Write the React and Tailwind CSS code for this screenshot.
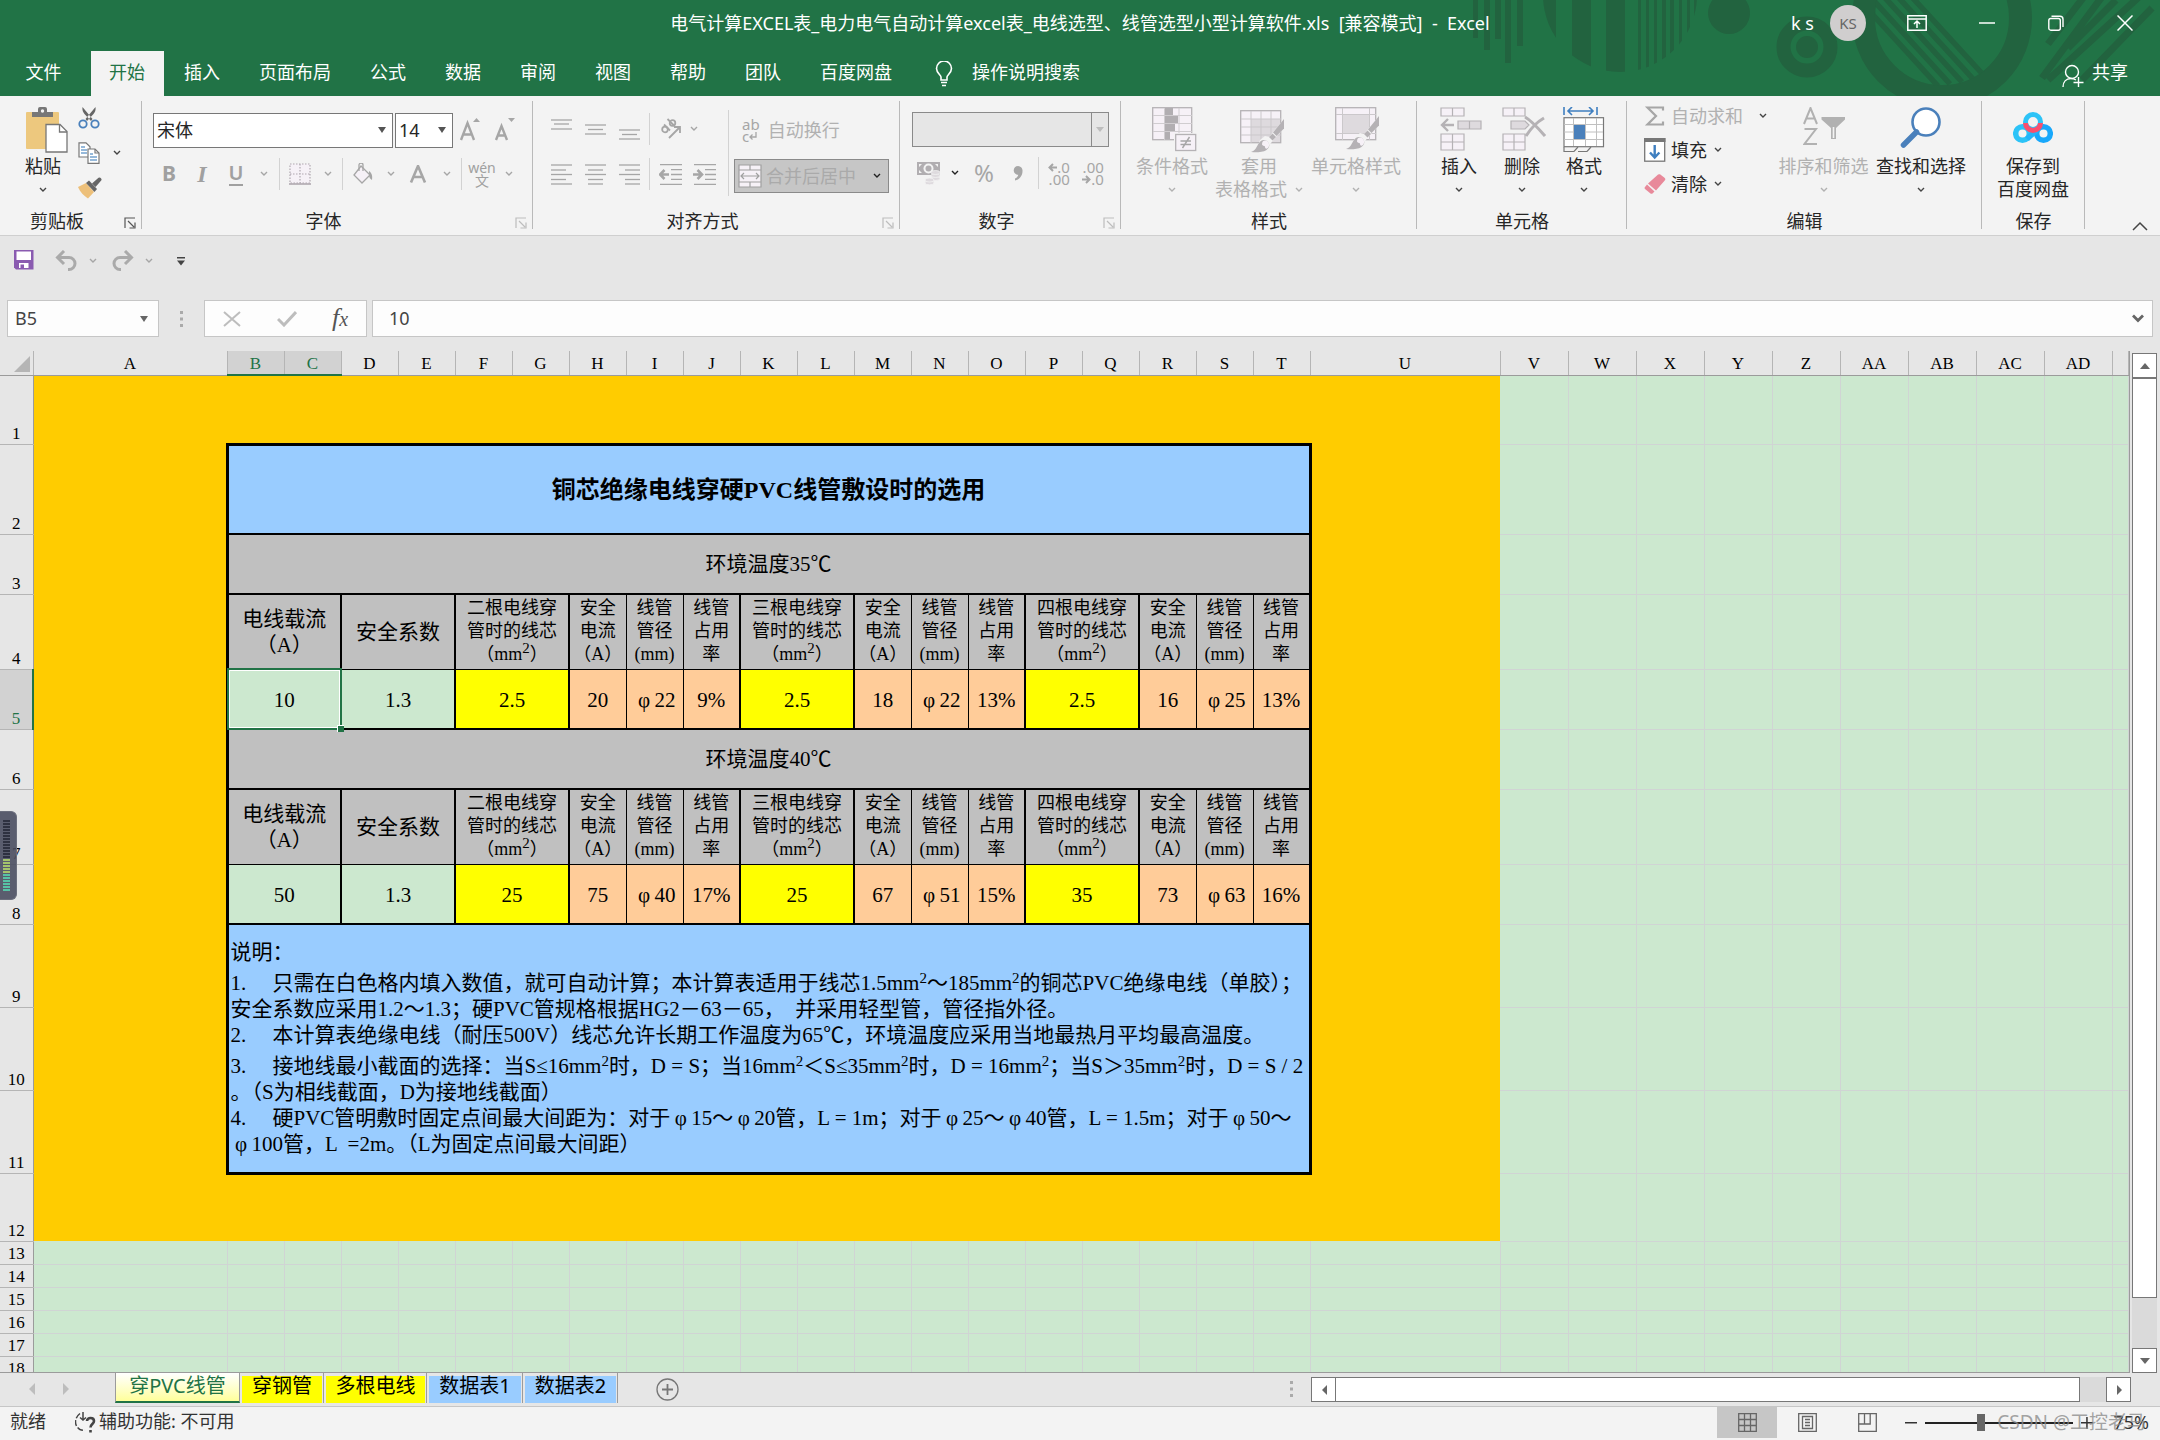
import React from "react";

const UI = "font-['Noto_Sans','Noto_Sans_CJK_SC',sans-serif]";
const SONG = "font-['Liberation_Serif','Noto_Sans_CJK_SC',serif]";

/* ---------- small parts ---------- */

function Chevron({ color = "#444", className = "" }) {
  return (
    <svg width="8" height="6" viewBox="0 0 8 6" fill="none" stroke={color} strokeWidth="1.4" className={className}>
      <path d="M1 1l3 3 3-3" />
    </svg>
  );
}

function Sep({ className = "" }) {
  return <span className={"w-px shrink-0 bg-[#d2d2d2] " + className} />;
}

function Tool({ label, w, children }) {
  return (
    <button type="button" aria-label={label} className={"flex h-8 shrink-0 items-center justify-center " + w}>
      {children}
    </button>
  );
}

function Launcher({ color }) {
  return (
    <svg width="12" height="12" viewBox="0 0 12 12" fill="none" stroke={color} strokeWidth="1.2">
      <path d="M1 11V1h10M4 4l6 6M11 5.500V11H5.500" />
    </svg>
  );
}

function Group({ label, w, launcher, children }) {
  return (
    <section aria-label={label} className={"relative flex shrink-0 flex-col " + w}>
      <div className="flex h-[111px]">{children}</div>
      <div className="flex h-7 items-center">
        <span className="flex-1 text-center leading-7 whitespace-nowrap">{label}</span>
        {launcher ? (
          <button type="button" aria-label={label + "设置"} className="flex w-7 justify-center pt-1 pl-2 pr-1">
            <Launcher color={launcher} />
          </button>
        ) : null}
      </div>
      <span className="absolute top-[5px] right-0 h-32 w-px bg-[#b9b9b9]" />
    </section>
  );
}

function BigButton({ w, icon, lines, disabled, inlineChevron, noChevron }) {
  const c = disabled ? "#b1b1b1" : "#444";
  return (
    <button
      type="button"
      className={
        "flex shrink-0 flex-col items-center pt-[11px] leading-[23px] whitespace-nowrap " +
        (disabled ? "text-[#b1b1b1] " : "text-[#262626] ") + w
      }
    >
      <span className="flex h-12 items-start">{icon}</span>
      <span>{lines[0]}</span>
      {lines[1] ? (
        <span className="flex items-center gap-2">
          {lines[1]}
          {inlineChevron ? <Chevron color={c} /> : null}
        </span>
      ) : null}
      {!lines[1] && !noChevron ? (
        <span className="flex h-[23px] items-center">
          <Chevron color={c} />
        </span>
      ) : null}
    </button>
  );
}

/* ---------- title bar ---------- */

function TitleArt() {
  return (
    <svg className="absolute top-0 right-0 h-24 w-[720px]" viewBox="0 0 720 96" fill="#22633f">
      <defs>
        <clipPath id="disc"><circle cx="180" cy="-5" r="77" /></clipPath>
        <clipPath id="ringhole"><circle cx="502" cy="18" r="68" /></clipPath>
      </defs>
      <path d="M33 0h5v38h-5zM44 0h6v50h-6zM55 0h6v39h-6zM65 0h6v63h-6zM77 0h6v46h-6z" />
      <g clipPath="url(#disc)">
        <path d="M100 0h16v90h-16zM132 0h19v90h-19zM166 0h19v90h-19zM198 0h3v90h-3zM206 0h3v90h-3zM214 0h3v90h-3zM222 0h4v90h-4zM230 0h4v90h-4zM239 0h3v90h-3zM247 0h3v90h-3zM254 0h3v90h-3z" />
      </g>
      <circle cx="289" cy="13" r="21" />
      <circle cx="367" cy="47" r="23.500" fill="none" stroke="#22633f" strokeWidth="14" />
      <circle cx="367" cy="47" r="11" />
      <circle cx="502" cy="18" r="78.500" fill="none" stroke="#22633f" strokeWidth="23" />
      <g clipPath="url(#ringhole)" stroke="#22633f" strokeWidth="5.500">
        <path d="M412 -8l86 94M424 -10l86 94M436 -12l86 94M448 -14l86 94M460 -16l88 96" />
      </g>
      <g stroke="#22633f" strokeWidth="7">
        <path d="M646 -6l-38 50M664 -6l-62 84M676 0l-48 48M700 -4l-92 84M712 8l-70 72" />
      </g>
    </svg>
  );
}

function TitleBar() {
  const tabs = ["插入", "页面布局", "公式", "数据", "审阅", "视图", "帮助", "团队", "百度网盘"];
  return (
    <header className="relative h-24 shrink-0 bg-[#217346] text-white">
      <TitleArt />
      <div className="relative grid h-[51px] grid-cols-[1fr_auto_1fr] items-center">
        <span />
        <h1 className="pb-1 whitespace-pre">
          电气计算EXCEL表_电力电气自动计算excel表_电线选型、线管选型小型计算软件.xls  [兼容模式]  -  Excel
        </h1>
        <div className="flex items-center justify-end pb-[5px]">
          <span className="pr-4">k s</span>
          <button type="button" className="mr-[41px] size-9 rounded-full bg-[#d0cece] text-[15px] text-[#666]">KS</button>
          <button type="button" aria-label="功能区显示选项" className="mr-[52px]">
            <svg width="20" height="16" viewBox="0 0 20 16" fill="none" stroke="#fff" strokeWidth="1.500">
              <path d="M.8.8h18.400v14.400H.8zM1 4h18M10 13V6.500M7 9l3-3 3 3" />
            </svg>
          </button>
          <button type="button" aria-label="最小化" className="mr-[53px]">
            <svg width="16" height="16" viewBox="0 0 16 16" stroke="#fff" strokeWidth="1.500"><path d="M0 8h16" /></svg>
          </button>
          <button type="button" aria-label="还原" className="mr-[53px]">
            <svg width="16" height="16" viewBox="0 0 16 16" fill="none" stroke="#fff" strokeWidth="1.400">
              <rect x=".8" y="3.500" width="11.500" height="11.700" rx="2" />
              <path d="M3.500 1.200H12a3 3 0 013 3V12" />
            </svg>
          </button>
          <button type="button" aria-label="关闭" className="mr-[27px]">
            <svg width="16" height="16" viewBox="0 0 16 16" stroke="#fff" strokeWidth="1.500"><path d="M.5.5l15 15M15.500.5l-15 15" /></svg>
          </button>
        </div>
      </div>
      <nav className="relative flex h-[45px] items-stretch leading-[42px]">
        <button type="button" className="w-[91px] pr-1 pb-[3px]">文件</button>
        <button type="button" className="w-[73px] bg-[#f3f3f3] pr-px pb-[3px] text-[#217346]">开始</button>
        {tabs.map((t) => (
          <button key={t} type="button" className="ml-px px-[19px] pb-[3px] whitespace-nowrap">{t}</button>
        ))}
        <button type="button" className="ml-6 flex items-center gap-[19px] whitespace-nowrap">
          <svg width="18" height="26" viewBox="0 0 18 26" fill="none" stroke="#fff" strokeWidth="1.600">
            <path d="M6 19v-3c0-2-4.500-4-4.500-8.500a7.500 7.500 0 0115 0C16.500 12 12 14 12 16v3zM6 21.500h6M7 24.500h4" />
          </svg>
          <span className="pb-[3px]">操作说明搜索</span>
        </button>
        <button type="button" className="mr-8 ml-auto flex items-center gap-2">
          <svg width="22" height="24" viewBox="0 0 22 24" fill="none" stroke="#fff" strokeWidth="1.400" className="mt-1">
            <circle cx="10" cy="8" r="6.500" />
            <path d="M1 23c0-5 3-8.500 8-8.500 2 0 3.500.5 5 1.500M16.500 13v10M11.500 18.500h10" />
          </svg>
          <span className="pb-[3px]">共享</span>
        </button>
      </nav>
    </header>
  );
}

/* ---------- ribbon icons ---------- */

const G = "#a6a6a6";

function PasteIcon() {
  return (
    <svg width="42" height="46" viewBox="0 0 42 46">
      <rect x="0" y="5" width="33" height="37" rx="1" fill="#edc87e" />
      <path d="M6 5h6V2a2 2 0 012-2h5a2 2 0 012 2v3h6v5H6z" fill="#777" />
      <circle cx="16.500" cy="4" r="1.700" fill="#f3f3f3" />
      <path d="M20 17.500h14l7 7V45H20z" fill="#fff" stroke="#777" strokeWidth="1.300" />
      <path d="M33.500 17.500v7.500H41" fill="none" stroke="#777" strokeWidth="1.300" />
    </svg>
  );
}

function ScissorsIcon() {
  return (
    <svg width="22" height="22" viewBox="0 0 22 22" fill="none">
      <path d="M4.500 0C4 3 5 5 6.500 7l6.500 7 1.500-2zM17.500 0c.5 3-.5 5-2 7L9 14l-1.500-2z" fill="#666" />
      <circle cx="5" cy="17" r="3.700" stroke="#4a80bb" strokeWidth="1.800" />
      <circle cx="17" cy="17" r="3.700" stroke="#4a80bb" strokeWidth="1.800" />
    </svg>
  );
}

function CopyIcon() {
  return (
    <svg width="22" height="22" viewBox="0 0 22 22" strokeWidth="1.200">
      <path d="M1 .8h7l4 4V15H1z" fill="#fff" stroke="#777" />
      <path d="M3 5h4M3 8h6M3 11h6" stroke="#2f75b5" />
      <path d="M10 7h7l4 4v10.400H10z" fill="#fff" stroke="#777" />
      <path d="M17 7v4h4" fill="none" stroke="#777" />
      <path d="M12 12h3M12 15h7M12 18h7" stroke="#2f75b5" />
    </svg>
  );
}

function BrushIcon() {
  return (
    <svg width="24" height="22" viewBox="0 0 24 22">
      <path d="M0 10l8-4 8 9-6 6.500C6 19 2 15 0 10z" fill="#edc07a" />
      <path d="M8 6l3-2.500 8 8.500-2.500 3z" fill="#666" />
      <path d="M14 6.500L20.500.8a2 2 0 012.700 2.800L17.500 10z" fill="#666" />
    </svg>
  );
}

function Lines({ rows }) {
  return (
    <svg width="21" height="21" viewBox="0 0 21 21" stroke={G} strokeWidth="1.300">
      {rows.map(([y, a, b], i) => <path key={i} d={`M${a} ${y}H${b}`} />)}
    </svg>
  );
}

function IndentIcon({ right }) {
  return (
    <svg width="23" height="21" viewBox="0 0 23 21" stroke={G} strokeWidth="1.300" fill="none">
      <path d="M1 .7h22M12 5.700h11M12 10.500h11M12 15.300h11M1 20.300h22" />
      <path d={right ? "M0 10.500h8M4.500 6l4.500 4.500L4.500 15" : "M10 10.500H2M5.500 6L1 10.500 5.500 15"} strokeWidth="2.600" />
    </svg>
  );
}

function CondIcon() {
  return (
    <svg width="45" height="46" viewBox="0 0 45 46" fill="none">
      <rect x=".7" y=".7" width="39" height="32" fill="#f6f1f7" stroke="#b5b2b5" strokeWidth="1.300" />
      <path d="M1 8.500h39M1 16.500h39M1 24.500h39M12.500 1v32M27 1v32" stroke="#d0cdd0" />
      <path d="M13 1h8v7h-8zM13 9h13v7H13zM13 17h10v7H13zM13 25h5v7h-5z" fill="#b1aeb1" />
      <rect x="22" y="26" width="23" height="19" fill="#f3f3f3" />
      <rect x="23.700" y="27.500" width="20" height="16" fill="#f6f1f7" stroke="#b5b2b5" strokeWidth="1.300" />
      <path d="M28.500 34h10.500M28.500 37.500h10.500M37.500 30l-7 11" stroke="#a6a6a6" strokeWidth="1.400" />
    </svg>
  );
}

function Painter() {
  return (
    <g>
      <path d="M44 12v9.500L35.500 30.500 32.500 34 27 41l-6 5H9l8-5 3-8 5-4 4 1z" fill="#f3f3f3" />
      <path d="M44 12v9.500L36.500 29 33 25.500z" fill="#b5b2b5" />
      <path d="M32.500 26.500L36 30l-3.500 3.500-3.500-3.500z" fill="#b5b2b5" />
      <path d="M11 45c5-1.500 5-5 8-9 2-3 5-4 8-2 3 3 3 6 0 8.500-3 2.500-7 3-16 2.500z" fill="#b5b2b5" />
      <path d="M25 33.500c3 0 4.500 2.500 4 5.500-1 3-4 4-4 .5-1-1-2.500-.5-3-2 0-2.500 1-4 3-4z" fill="#f6f1f7" />
    </g>
  );
}

function TableStyleIcon() {
  return (
    <svg width="46" height="46" viewBox="0 0 46 46" fill="none">
      <rect x=".7" y="3.700" width="40" height="32" fill="#f6f1f7" stroke="#b5b2b5" strokeWidth="1.300" />
      <path d="M11 12h29v23H11z" fill="#dedade" />
      <path d="M1 12h40M1 20h40M1 28h40M11 4v32M21 4v32M31 4v32" stroke="#cbc8cb" />
      <Painter />
    </svg>
  );
}

function CellStyleIcon() {
  return (
    <svg width="46" height="46" viewBox="0 0 46 46" fill="none">
      <rect x=".7" y=".7" width="40" height="32" fill="#f6f1f7" stroke="#b5b2b5" strokeWidth="1.300" />
      <path d="M8 8h26v18H8z" fill="#dedade" />
      <path d="M1 7.500h40M1 26.500h40M7.500 1v32M34.500 1v32" stroke="#cbc8cb" />
      <g transform="translate(0 -3)"><Painter /></g>
    </svg>
  );
}

function InsertIcon() {
  return (
    <svg width="43" height="44" viewBox="0 0 43 44" fill="#f6f1f7" stroke="#b5b2b5" strokeWidth="1.200">
      <path d="M1 1h23v8H1zM12.500 1v8M1 27h23v16H1zM1 35h23M12.500 27v16" />
      <path d="M18 14h23v8H18zM29.500 14v8" fill="#dedade" />
      <path d="M14 18H2M8 12l-6 6 6 6" fill="none" strokeWidth="2.400" />
    </svg>
  );
}

function DeleteIcon() {
  return (
    <svg width="44" height="44" viewBox="0 0 44 44" fill="#f6f1f7" stroke="#b5b2b5" strokeWidth="1.200">
      <path d="M1 1h22v8H1zM12 1v8M1 27h22v16H1zM1 35h22M12 27v16" />
      <path d="M9 14h14l4 4-4 4H9z" fill="#dedade" />
      <path d="M23 10c7 4 13 11 20 19M42 11c-7 4-13 10-18 18" fill="none" strokeWidth="3" />
    </svg>
  );
}

function FormatIcon() {
  return (
    <svg width="42" height="46" viewBox="0 0 42 46" fill="none">
      <path d="M1 0v8M34 0v8M5 4h25M9 0L5 4l4 4M26 0l4 4-4 4" stroke="#3f7fc0" strokeWidth="1.600" />
      <rect x="1" y="10.700" width="39.500" height="29" fill="#fff" stroke="#777" strokeWidth="1.200" />
      <path d="M1 17.500h39M1 32.500h39M10.500 11v28M22.500 11v28M33.500 11v28M1 25h39" stroke="#c0c0c0" />
      <path d="M11 18h11v14H11z" fill="#4a80bb" />
      <path d="M1 40v4.500h10l4-4.500M15 44.500h9l4-4.500" stroke="#777" strokeWidth="1.200" />
    </svg>
  );
}

function SortIcon() {
  return (
    <svg width="42" height="40" viewBox="0 0 42 40" fill="none" stroke="#b1b1b1" strokeWidth="2">
      <path d="M1 17L7.500 1 14 17M3.500 11.500h8M1.500 22h11.500L1.500 37H14" />
      <path d="M18.500 10h23.500v2.500l-9 8.500V32h-5V21l-9.500-8.500z" fill="#b1b1b1" stroke="none" />
      <path d="M30.500 20v11" stroke="#f3f3f3" strokeWidth="1.600" />
    </svg>
  );
}

function FindIcon() {
  return (
    <svg width="42" height="42" viewBox="0 0 42 42" fill="none" stroke="#4a80bb">
      <circle cx="26" cy="15" r="13.500" fill="#fff" strokeWidth="2.600" />
      <path d="M16.500 25L3.500 38" strokeWidth="5.500" strokeLinecap="round" />
    </svg>
  );
}

function BaiduIcon() {
  return (
    <svg width="40" height="34" viewBox="0 0 40 34" fill="none" strokeWidth="5.500">
      <circle cx="9.500" cy="22.500" r="6.800" stroke="#2cc3f7" />
      <circle cx="30.500" cy="22.500" r="6.800" stroke="#18a8fb" />
      <path d="M14 28l12-11" stroke="#22b4fa" />
      <circle cx="20" cy="11" r="7.500" stroke="#2cc3f7" strokeWidth="5" />
      <path d="M12.500 12a7.500 7.500 0 0015 0" stroke="#fa4f6e" strokeWidth="5" />
    </svg>
  );
}

/* ---------- ribbon ---------- */

function Ribbon() {
  const smallRow = "flex h-[34px] items-center whitespace-nowrap";
  return (
    <div className="flex h-[140px] shrink-0 border-b border-[#cfcfcf] bg-[#f3f3f3] text-[#262626]">
      <Group label="剪贴板" w="w-[142px]" launcher="#555">
        <BigButton w="w-[62px] ml-[12px]" icon={<span className="pl-2"><PasteIcon /></span>} lines={["粘贴"]} />
        <div className="flex flex-col gap-[13px] pt-[11px] pl-1">
          <button type="button" aria-label="剪切"><ScissorsIcon /></button>
          <button type="button" aria-label="复制" className="flex items-center gap-[13px]"><CopyIcon /><Chevron /></button>
          <button type="button" aria-label="格式刷"><BrushIcon /></button>
        </div>
      </Group>

      <Group label="字体" w="w-[391px]" launcher="#bdbdbd">
        <div className="flex flex-col pt-4 pl-[11px]">
          <div className="flex h-9 items-center">
            <label className="relative mr-[2px] block">
              <select aria-label="字体" className="h-[35px] w-60 appearance-none border border-[#777] bg-white pl-[3px]">
                <option>宋体</option>
              </select>
              <svg width="8" height="6" className="absolute top-[14px] right-[7px]"><path d="M0 0h8l-4 6z" fill="#555" /></svg>
            </label>
            <label className="relative block">
              <select aria-label="字号" className="h-[35px] w-[58px] appearance-none border border-[#777] bg-white pl-[3px]">
                <option>14</option>
              </select>
              <svg width="8" height="6" className="absolute top-[14px] right-[7px]"><path d="M0 0h8l-4 6z" fill="#555" /></svg>
            </label>
            <Tool label="增大字号" w="w-[34px]">
              <svg width="22" height="24" viewBox="0 0 22 24" fill="none" stroke={G} strokeWidth="2.400">
                <path d="M2 22L8.500 5 15 22M4.500 16.500h8" /><path d="M14 4l3.500-4L21 4z" fill={G} stroke="none" />
              </svg>
            </Tool>
            <Tool label="减小字号" w="w-[34px]">
              <svg width="22" height="24" viewBox="0 0 22 24" fill="none" stroke={G} strokeWidth="2.400">
                <path d="M3 22L8.500 8 14 22M5 17.500h7" /><path d="M15 0h7l-3.500 4z" fill={G} stroke="none" />
              </svg>
            </Tool>
          </div>
          <div className="mt-[10px] flex h-8 items-center text-[21px] text-[#a0a0a0]">
            <Tool label="加粗" w="w-8"><b>B</b></Tool>
            <Tool label="倾斜" w="w-[34px]"><i className="font-['Liberation_Serif',serif] text-[24px] font-bold">I</i></Tool>
            <Tool label="下划线" w="w-[34px]"><span className="border-b-2 border-[#a0a0a0] text-[20px] leading-[22px] font-semibold">U</span></Tool>
            <Tool label="下划线选项" w="w-[22px]"><Chevron color={G} /></Tool>
            <Sep className="mx-1 h-8" />
            <Tool label="边框" w="w-8">
              <svg width="22" height="22" viewBox="0 0 22 22" fill="#f6f1f7" stroke="#b0a8b0" strokeWidth="1.200">
                <path d="M1 1h20v19H1zM11 1v19M1 11h20" strokeDasharray="1.500 1.500" /><path d="M0 21h22" strokeWidth="1.600" />
              </svg>
            </Tool>
            <Tool label="边框选项" w="w-6"><Chevron color={G} /></Tool>
            <Sep className="mx-[2px] h-8" />
            <Tool label="填充颜色" w="w-9">
              <svg width="20" height="22" viewBox="0 0 20 22" fill="none" stroke={G} strokeWidth="1.300">
                <path d="M8 3l9 9-8 8-8-8z" fill="#f6f1f7" /><path d="M6 8V2a2 2 0 014 0v6" /><path d="M16 8c3 2 3.500 5 3 9-2-1-3-3-3-5z" fill={G} stroke="none" />
              </svg>
            </Tool>
            <Tool label="填充颜色选项" w="w-5"><Chevron color={G} /></Tool>
            <Tool label="字体颜色" w="w-[34px]">
              <svg width="18" height="18" viewBox="0 0 18 18" fill="none" stroke={G} strokeWidth="2.600"><path d="M2 17.500L9 1l7 16.500M4.500 12h9" /></svg>
            </Tool>
            <Tool label="字体颜色选项" w="w-6"><Chevron color={G} /></Tool>
            <Sep className="mx-[2px] h-8" />
            <Tool label="拼音指南" w="w-9">
              <span className="flex flex-col items-center text-[14px] leading-3"><span className="pb-px">wén</span><span>文</span></span>
            </Tool>
            <Tool label="拼音指南选项" w="w-[18px]"><Chevron color={G} /></Tool>
          </div>
        </div>
      </Group>

      <Group label="对齐方式" w="w-[367px]" launcher="#bdbdbd">
        <div className="flex flex-col pt-[17px] pl-[11px]">
          <div className="flex h-8 items-center">
            <Tool label="顶端对齐" w="w-[34px]"><Lines rows={[[1, 0, 21], [5, 3, 18], [10, 0, 21]]} /></Tool>
            <Tool label="垂直居中" w="w-[34px]"><Lines rows={[[6, 0, 21], [10.5, 3, 18], [15, 0, 21]]} /></Tool>
            <Tool label="底端对齐" w="w-[34px]"><Lines rows={[[11, 0, 21], [15.5, 3, 18], [20, 0, 21]]} /></Tool>
            <Sep className="mr-1 ml-[3px] h-8" />
            <Tool label="方向" w="w-[50px]">
              <svg width="22" height="22" viewBox="0 0 22 22" fill="none" stroke={G} strokeWidth="1.800">
                <circle cx="5" cy="11.500" r="2.800" /><path d="M4 6.500l6 6" /><path d="M7.500 1l7 7" /><circle cx="12.500" cy="5" r="2.800" /><path d="M9 20L20 9M14 9h6v6" />
              </svg>
              <Chevron color={G} className="ml-2" />
            </Tool>
          </div>
          <div className="mt-[13px] flex h-8 items-center">
            <Tool label="左对齐" w="w-[34px]"><Lines rows={[[1, 0, 21], [6, 0, 15], [10.5, 0, 21], [15.5, 0, 15], [20, 0, 21]]} /></Tool>
            <Tool label="居中" w="w-[34px]"><Lines rows={[[1, 0, 21], [6, 3, 18], [10.5, 0, 21], [15.5, 3, 18], [20, 3, 18]]} /></Tool>
            <Tool label="右对齐" w="w-[34px]"><Lines rows={[[1, 0, 21], [6, 6, 21], [10.5, 0, 21], [15.5, 6, 21], [20, 6, 21]]} /></Tool>
            <Sep className="mr-1 ml-[3px] h-8" />
            <Tool label="减少缩进量" w="w-8"><IndentIcon /></Tool>
            <Tool label="增加缩进量" w="w-9"><IndentIcon right /></Tool>
          </div>
        </div>
        <Sep className="mt-[14px] ml-[6px] h-[86px]" />
        <div className="flex flex-col pt-4 pl-[5px]">
          <button type="button" className="flex h-9 items-center gap-[8px] pl-2 text-[#b1b1b1]">
            <span className="flex flex-col text-[15px] leading-3 text-[#a6a6a6]">
              <span>ab</span>
              <span className="flex items-center">
                c
                <svg width="8" height="8" viewBox="0 0 8 8" fill="none" stroke={G} strokeWidth="1.300"><path d="M7 0v5H1M3.500 2.500L1 5l2.500 2.500" /></svg>
              </span>
            </span>
            自动换行
          </button>
          <button type="button" className="mt-[11px] flex h-[34px] w-[155px] items-center border border-[#8a8a8a] bg-[#c6c6c6] pl-[3px] text-[#aaa]">
            <svg width="24" height="24" viewBox="0 0 24 24" fill="#f6f1f7" stroke="#a0a0a0" strokeWidth="1.200">
              <path d="M1 1h22v5H1zM12 1v5M1 6h22v12H1zM1 18h22v5H1zM12 18v5" /><path d="M3 12h18M6 9l-3 3 3 3M18 9l3 3-3 3" fill="none" />
            </svg>
            <span className="pl-1">合并后居中</span>
            <Chevron color="#222" className="ml-[17px]" />
          </button>
        </div>
      </Group>

      <Group label="数字" w="w-[221px]" launcher="#bdbdbd">
        <div className="flex flex-col pt-4 pl-3">
          <label className="relative block">
            <select aria-label="数字格式" disabled className="h-[35px] w-[197px] appearance-none border border-[#8a8a8a] bg-[#e6e6e6]"><option></option></select>
            <span className="absolute top-0 right-[19px] h-[35px] w-px bg-[#8a8a8a]" />
            <svg width="8" height="5" className="absolute top-[15px] right-[7px]"><path d="M0 0h8l-4 5z" fill="#bdbdbd" /></svg>
          </label>
          <div className="mt-[10px] flex h-8 items-center text-[#a6a6a6]">
            <Tool label="会计数字格式" w="w-8">
              <svg width="23" height="23" viewBox="0 0 23 23">
                <path d="M0 0h23v13H0z" fill="#b1aeb1" /><circle cx="11.500" cy="6.500" r="5" fill="#f3f3f3" /><circle cx="11.500" cy="6.500" r="3" fill="#b1aeb1" />
                <path d="M2 2h3L2 5zM21 2h-3l3 3zM2 11h3L2 8z" fill="#f3f3f3" />
                <g fill="#dedade" stroke="#f3f3f3" strokeWidth=".8"><ellipse cx="18.500" cy="16.500" rx="4.500" ry="2" /><ellipse cx="18.500" cy="13.500" rx="4.500" ry="2" /><ellipse cx="18.500" cy="10.500" rx="4.500" ry="2" /><ellipse cx="12.500" cy="20.800" rx="4.500" ry="2" /><ellipse cx="12.500" cy="18" rx="4.500" ry="2" /></g>
              </svg>
            </Tool>
            <Tool label="会计格式选项" w="w-[22px]"><Chevron color="#222" /></Tool>
            <Tool label="百分比样式" w="w-[36px]"><span className="text-[24px]">%</span></Tool>
            <Tool label="千位分隔样式" w="w-8">
              <svg width="10" height="15" viewBox="0 0 10 15" fill={G}><path d="M5 0a4.500 4.500 0 014.500 5c0 5-3 8.500-7.500 9.500v-2c2-1 3-2 3.200-3.700A4.300 4.300 0 115 0z" /></svg>
            </Tool>
            <Sep className="mx-1 h-8" />
            <Tool label="增加小数位数" w="w-8">
              <span className="flex flex-col items-end text-[15px] leading-3">
                <span className="flex items-center"><svg width="9" height="9" viewBox="0 0 9 9" fill="none" stroke={G} strokeWidth="2"><path d="M9 4.500H1.500M5 1L1.500 4.500 5 8" /></svg>.0</span>
                <span>.00</span>
              </span>
            </Tool>
            <Tool label="减少小数位数" w="w-9">
              <span className="flex flex-col items-end text-[15px] leading-3">
                <span>.00</span>
                <span className="flex items-center"><svg width="9" height="9" viewBox="0 0 9 9" fill="none" stroke={G} strokeWidth="2"><path d="M0 4.500h7.500M4 1l3.500 3.500L4 8" /></svg>.0</span>
              </span>
            </Tool>
          </div>
        </div>
      </Group>

      <Group label="样式" w="w-[296px]">
        <BigButton w="w-[86px] ml-2" disabled icon={<span className="pl-1"><CondIcon /></span>} lines={["条件格式"]} />
        <BigButton w="w-[88px]" disabled inlineChevron icon={<span className="pl-2"><TableStyleIcon /></span>} lines={["套用", "表格格式"]} />
        <BigButton w="w-[98px] ml-1" disabled icon={<span className="pl-1"><CellStyleIcon /></span>} lines={["单元格样式"]} />
      </Group>

      <Group label="单元格" w="w-[210px]">
        <BigButton w="w-[62px] ml-[11px]" icon={<span className="pl-1"><InsertIcon /></span>} lines={["插入"]} />
        <BigButton w="w-[62px] ml-px" icon={<span className="pl-1"><DeleteIcon /></span>} lines={["删除"]} />
        <BigButton w="w-[62px]" icon={<FormatIcon />} lines={["格式"]} />
      </Group>

      <Group label="编辑" w="w-[355px]">
        <div className="flex w-[148px] flex-col pt-[3px] pl-[17px]">
          <button type="button" className={smallRow + " text-[#b1b1b1]"}>
            <svg width="22" height="20" viewBox="0 0 22 20" fill="none" stroke={G} strokeWidth="2.200"><path d="M19 4.500V1.500H3.500L12 10l-8.500 8.500H19v-3" /></svg>
            <span className="pl-[5px]">自动求和</span><Chevron className="ml-4" />
          </button>
          <button type="button" className={smallRow}>
            <svg width="22" height="24" viewBox="0 0 22 24"><rect x=".7" y=".7" width="20" height="22.500" fill="#fff" stroke="#777" strokeWidth="1.300" /><path d="M0 0h21.500v4H0z" fill="#777" /><path d="M10.700 7v12M6 14.500l4.700 5 4.700-5" fill="none" stroke="#3f7fc0" strokeWidth="2.400" /></svg>
            <span className="pl-[5px]">填充</span><Chevron className="ml-[7px]" />
          </button>
          <button type="button" className={smallRow}>
            <svg width="22" height="20" viewBox="0 0 22 20" fill="#e8899a"><path d="M13 1.500a3 3 0 013-1.200l4.500 3.500a2 2 0 010 3L12 16.500 4 9.500zM3 10.500l7.500 7-2 2a2 2 0 01-2 0L1 15a1.500 1.500 0 010-2z" /></svg>
            <span className="pl-[5px]">清除</span><Chevron className="ml-[7px]" />
          </button>
        </div>
        <BigButton w="w-[97px]" disabled icon={<SortIcon />} lines={["排序和筛选"]} />
        <BigButton w="w-[98px]" icon={<FindIcon />} lines={["查找和选择"]} />
      </Group>

      <Group label="保存" w="w-[103px]">
        <BigButton w="w-[102px]" icon={<span className="pt-1"><BaiduIcon /></span>} lines={["保存到", "百度网盘"]} />
      </Group>

      <button type="button" aria-label="折叠功能区" className="mr-3 mb-1 ml-auto self-end">
        <svg width="16" height="10" viewBox="0 0 16 10" fill="none" stroke="#444" strokeWidth="1.500"><path d="M1 9l7-7 7 7" /></svg>
      </button>
    </div>
  );
}

/* ---------- quick access + formula bar ---------- */

function QuickAccess() {
  const arrow = "M2 7.500h12a6 6 0 010 12h-1M9 1L2.500 7.500 9 14";
  return (
    <div className="flex h-16 shrink-0 items-start pt-[14px] pl-[14px]">
      <button type="button" aria-label="保存">
        <svg width="20" height="20" viewBox="0 0 20 20"><path d="M0 0h19.500v19.500H2L0 17.500z" fill="#8a5bb0" /><path d="M2.500 1.500H17V10H2.500zM5 13h9.500v5H5z" fill="#fff" /><path d="M6.500 14.500h3.500V18H6.500z" fill="#8a5bb0" /></svg>
      </button>
      <button type="button" aria-label="撤消" className="ml-[21px] flex items-center gap-[11px]">
        <svg width="23" height="22" viewBox="0 0 23 22" fill="none" stroke="#aaa" strokeWidth="3"><path d={arrow} /></svg>
        <Chevron color={G} />
      </button>
      <button type="button" aria-label="恢复" className="ml-[14px] flex items-center gap-[11px]">
        <svg width="23" height="22" viewBox="0 0 23 22" fill="none" stroke="#aaa" strokeWidth="3"><path d={arrow} transform="matrix(-1 0 0 1 23 0)" /></svg>
        <Chevron color={G} />
      </button>
      <button type="button" aria-label="自定义快速访问工具栏" className="mt-[7px] ml-6">
        <svg width="8" height="9" viewBox="0 0 8 9" fill="#444"><path d="M0 0h8v1.500H0zM0 3.500h8l-4 5z" /></svg>
      </button>
    </div>
  );
}

function Dots() {
  return (
    <svg width="3" height="16" viewBox="0 0 3 16" fill="#aaa"><path d="M0 0h3v3H0zM0 6.500h3v3H0zM0 13h3v3H0z" /></svg>
  );
}

function FormulaBar() {
  const box = "h-[37px] border border-[#c6c6c6] bg-[#fdfdfd]";
  return (
    <div className="flex h-[51px] shrink-0 items-start pr-[7px] pl-[7px] text-[#444]">
      <div className={"flex w-[152px] items-center " + box}>
        <input aria-label="名称框" defaultValue="B5" className="w-[132px] bg-transparent pl-[7px] outline-none" />
        <svg width="8" height="6"><path d="M0 0h8l-4 6z" fill="#666" /></svg>
      </div>
      <span className="flex h-[37px] w-[45px] items-center justify-center"><Dots /></span>
      <div className={"mr-[5px] flex w-[163px] items-center " + box}>
        <button type="button" aria-label="取消" className="ml-[18px]">
          <svg width="18" height="16" viewBox="0 0 18 16" fill="none" stroke="#bdbdbd" strokeWidth="2"><path d="M1 1l16 14M17 1L1 15" /></svg>
        </button>
        <button type="button" aria-label="输入" className="ml-9">
          <svg width="20" height="16" viewBox="0 0 20 16" fill="none" stroke="#bdbdbd" strokeWidth="3"><path d="M1 8l6 6L19 1" /></svg>
        </button>
        <button type="button" aria-label="插入函数" className="ml-[35px] font-['Liberation_Serif',serif] text-[26px] leading-8 text-[#555] italic">
          f<span className="text-[20px]">x</span>
        </button>
      </div>
      <div className={"flex min-w-0 flex-1 items-center " + box}>
        <input aria-label="编辑栏" defaultValue="10" className="min-w-0 flex-1 bg-transparent pl-4 outline-none" />
        <button type="button" aria-label="展开编辑栏" className="pr-2">
          <svg width="12" height="9" viewBox="0 0 12 9" fill="none" stroke="#666" strokeWidth="2.800"><path d="M1 1.500l5 5 5-5" /></svg>
        </button>
      </div>
    </div>
  );
}

/* ---------- worksheet ---------- */

const NARROW = "BCDEFGHIJKLMNOPQRST".split("");
const WIDE = ["V", "W", "X", "Y", "Z", "AA", "AB", "AC", "AD", ""];

function Rich({ children }) {
  return children.split(/(φ|²)/).map((part, i) => {
    if (part === "φ") return <span key={i} className="inline-block w-[1em] text-center">φ</span>;
    if (part === "²") return <sup key={i} className="text-[15px]">2</sup>;
    return part;
  });
}

function RowHead({ n, h, selected }) {
  return (
    <th
      scope="row"
      className={
        "border-b border-b-[#b5b5b5] p-0 text-center align-bottom text-[17px] leading-[20px] font-normal " +
        (selected
          ? "border-r-2 border-r-[#217346] bg-[#d2d2d2] text-[#217346] "
          : "border-r border-r-[#9b9b9b] bg-[#e6e6e6] text-black ") + h
      }
    >
      {n}
    </th>
  );
}

const EMPTY = "border-r border-b border-[#d0d4d4] bg-[#cce8cf] p-0";
const GOLD = "bg-[#ffcc00] p-0";

function Rest() {
  return WIDE.map((c) => <td key={c} className={EMPTY} />);
}

function SheetRow({ n, h, selected, children }) {
  return (
    <tr>
      <RowHead n={n} h={h} selected={selected} />
      <td className={GOLD} />
      {children}
      <td className={GOLD} />
      <Rest />
    </tr>
  );
}

function HeadRow({ n }) {
  const base = "border-2 border-b border-black bg-[#c0c0c0] p-0 text-center align-middle ";
  const thin = "border border-t-2 border-black bg-[#c0c0c0] p-0 text-center align-middle text-[18px] leading-[23px]";
  return (
    <SheetRow n={n} h="h-[75px]">
      <td colSpan={2} className={base + "border-l-[3px] text-[21px] leading-[26px]"}>电线载流<br />（A）</td>
      <td colSpan={2} className={base + "text-[21px] leading-[26px]"}>安全系数</td>
      {["二", "三", "四"].map((k, i) => (
        <React.Fragment key={k}>
          <td colSpan={2} className={base + "text-[18px] leading-[23px]"}>{k}根电线穿<br />管时的线芯<br /><Rich>（mm²）</Rich></td>
          <td className={thin}>安全<br />电流<br />（A）</td>
          <td className={thin}>线管<br />管径<br />(mm)</td>
          <td className={thin + (i === 2 ? " border-r-[3px]" : " border-r-2")}>线管<br />占用<br />率</td>
        </React.Fragment>
      ))}
    </SheetRow>
  );
}

function ValueRow({ n, load, factor, sets, selected }) {
  const base = "border-2 border-t border-black p-0 pt-1 text-center align-middle text-[21px] ";
  const thin = "border border-b-2 border-black bg-[#ffcc99] p-0 pt-1 text-center align-middle text-[21px] whitespace-nowrap";
  return (
    <SheetRow n={n} h="h-[60px]" selected={selected}>
      <td colSpan={2} className={base + "relative border-l-[3px] bg-[#cce8cf]"}>
        {load}
        {selected ? (
          <span className="absolute -inset-[2px] border-2 border-[#217346] shadow-[inset_0_0_0_1px_#fff]">
            <span className="absolute -right-1 -bottom-1 size-[7px] border-t border-l border-white bg-[#217346]" />
          </span>
        ) : null}
      </td>
      <td colSpan={2} className={base + "bg-[#cce8cf]"}>{factor}</td>
      {sets.map((s, i) => (
        <React.Fragment key={i}>
          <td colSpan={2} className={base + "bg-[#ffff00]"}>{s[0]}</td>
          <td className={thin}>{s[1]}</td>
          <td className={thin}><Rich>{s[2]}</Rich></td>
          <td className={thin + (i === 2 ? " border-r-[3px]" : " border-r-2")}>{s[3]}</td>
        </React.Fragment>
      ))}
    </SheetRow>
  );
}

const NOTES = [
  ["说明：", false],
  ["1.     只需在白色格内填入数值，就可自动计算；本计算表适用于线芯1.5mm²～185mm²的铜芯PVC绝缘电线（单胶）；", true],
  ["安全系数应采用1.2～1.3；硬PVC管规格根据HG2－63－65，  并采用轻型管，管径指外径。", false],
  ["2.     本计算表绝缘电线（耐压500V）线芯允许长期工作温度为65℃，环境温度应采用当地最热月平均最高温度。", false],
  ["3.     接地线最小截面的选择：当S≤16mm²时，D = S；当16mm²＜S≤35mm²时，D = 16mm²；当S＞35mm²时，D = S / 2", true],
  ["。（S为相线截面，D为接地线截面）", false],
  ["4.     硬PVC管明敷时固定点间最大间距为：对于φ15～φ20管，L = 1m；对于φ25～φ40管，L = 1.5m；对于φ50～", false],
  ["φ100管，L  =2m。（L为固定点间最大间距）", false],
];

function Sheet() {
  const merged = "border-2 border-x-[3px] border-black bg-[#c0c0c0] p-0 pt-[2px] text-center align-middle text-[21px]";
  return (
    <table className={"w-full table-fixed border-collapse text-black " + SONG}>
      <colgroup>
        <col className="w-[33px]" />
        <col className="w-[194px]" />
        {NARROW.map((c) => <col key={c} className="w-[57px]" />)}
        <col className="w-[190px]" />
        {WIDE.map((c) => <col key={c} className={c ? "w-[68px]" : ""} />)}
      </colgroup>
      <thead>
        <tr>
          {["", "A", ...NARROW, "U", ...WIDE].map((c, i) => (
            <th
              key={i}
              scope="col"
              className={
                "h-6 border-r border-r-[#b5b5b5] p-0 pt-[3px] text-center text-[17px] leading-5 font-normal " +
                (c === "B" || c === "C"
                  ? "border-b-2 border-b-[#217346] bg-[#d2d2d2] text-[#217346]"
                  : "border-b border-b-[#9b9b9b] bg-[#e6e6e6]")
              }
            >
              {i === 0 ? (
                <svg width="16" height="16" viewBox="0 0 16 16" className="ml-[14px] block"><path d="M16 0v16H0z" fill="#b5b5b5" /></svg>
              ) : c}
            </th>
          ))}
        </tr>
      </thead>
      <tbody>
        <SheetRow n={1} h="h-[69px]"><td colSpan={19} className={GOLD} /></SheetRow>
        <SheetRow n={2} h="h-[90px]">
          <td colSpan={19} className="border-x-[3px] border-t-[3px] border-b-2 border-black bg-[#99ccff] p-0 pt-[2px] text-center align-middle text-[24px] font-bold">
            铜芯绝缘电线穿硬PVC线管敷设时的选用
          </td>
        </SheetRow>
        <SheetRow n={3} h="h-[60px]"><td colSpan={19} className={merged}>环境温度35℃</td></SheetRow>
        <HeadRow n={4} />
        <ValueRow
          n={5} selected load="10" factor="1.3"
          sets={[["2.5", "20", "φ22", "9%"], ["2.5", "18", "φ22", "13%"], ["2.5", "16", "φ25", "13%"]]}
        />
        <SheetRow n={6} h="h-[60px]"><td colSpan={19} className={merged}>环境温度40℃</td></SheetRow>
        <HeadRow n={7} />
        <ValueRow
          n={8} load="50" factor="1.3"
          sets={[["25", "75", "φ40", "17%"], ["25", "67", "φ51", "15%"], ["35", "73", "φ63", "16%"]]}
        />
        <SheetRow n={9} h="h-[83px]">
          <td colSpan={19} rowSpan={3} className="border-[3px] border-t-2 border-black bg-[#99ccff] p-0 pl-[2px] align-middle text-[21px] leading-[26px] whitespace-pre">
            {NOTES.map(([line, raised], i) => (
              <p key={i} className={raised ? "h-[31px] pt-[5px]" : "h-[26px]"}><Rich>{line}</Rich></p>
            ))}
          </td>
        </SheetRow>
        <SheetRow n={10} h="h-[83px]" />
        <SheetRow n={11} h="h-[83px]" />
        <SheetRow n={12} h="h-[68px]"><td colSpan={19} className={GOLD} /></SheetRow>
        {[13, 14, 15, 16, 17, 18].map((n) => (
          <tr key={n}>
            <RowHead n={n} h="h-[23px]" />
            {["A", ...NARROW, "U", ...WIDE].map((c) => <td key={c} className={EMPTY} />)}
          </tr>
        ))}
      </tbody>
    </table>
  );
}

function ScrollButton({ label, d, className }) {
  return (
    <button type="button" aria-label={label} className={"flex size-[25px] shrink-0 items-center justify-center border border-[#777] bg-white " + className}>
      <svg width="12" height="12" viewBox="0 0 12 12" fill="#666"><path d={d} /></svg>
    </button>
  );
}

/* ---------- bottom bars ---------- */

function SheetTabs() {
  const tabs = [
    ["穿钢管", "bg-[#ffff00]", "w-20"],
    ["多根电线", "bg-[#ffff00]", "w-[99px]"],
    ["数据表1", "bg-[#99ccff]", "w-[92px]"],
    ["数据表2", "bg-[#99ccff]", "w-[91px]"],
  ];
  return (
    <div className="flex h-[34px] shrink-0 items-start border-b border-[#c6c6c6]">
      <div className="flex w-[115px] items-center gap-[28px] pt-[10px] pl-[29px]">
        <button type="button" aria-label="上一张"><svg width="6" height="12" className="block"><path d="M6 0v12L0 6z" fill="#bdbdbd" /></svg></button>
        <button type="button" aria-label="下一张"><svg width="6" height="12" className="block"><path d="M0 0v12l6-6z" fill="#bdbdbd" /></svg></button>
      </div>
      <button type="button" className="flex h-[30px] w-[125px] items-start justify-center border-x border-b-2 border-[#9b9b9b] border-b-[#217346] bg-linear-to-b from-white to-[#ffff99] text-[20px] leading-[25px] text-[#217346]">
        穿PVC线管
      </button>
      {tabs.map(([t, bg, w]) => (
        <span key={t} className="flex h-[30px] items-start border-r border-[#9b9b9b] pt-[3px] pr-px pl-[2px]">
          <button type="button" className={"flex h-[27px] items-start justify-center text-[20px] leading-[20px] text-black " + bg + " " + w}>{t}</button>
        </span>
      ))}
      <button type="button" aria-label="新工作表" className="mt-[5px] ml-[38px]">
        <svg width="23" height="23" viewBox="0 0 23 23" fill="none" stroke="#777" strokeWidth="1.300"><circle cx="11.500" cy="11.500" r="10.500" /><path d="M11.500 6v11M6 11.500h11" strokeWidth="1.800" /></svg>
      </button>
      <span className="mt-[8px] mr-[18px] ml-auto"><Dots /></span>
      <div className="mt-1 mr-[29px] flex w-[820px] bg-[#dadada]">
        <ScrollButton label="向左" d="M9 1v10L4 6z" className="" />
        <span className="-ml-px h-[25px] flex-1 border border-[#777] bg-white" />
        <ScrollButton label="向右" d="M4 1v10l5-5z" className="ml-[26px]" />
      </div>
    </div>
  );
}

function StatusBar() {
  const view = "flex h-[31px] w-[60px] items-center justify-center";
  return (
    <footer className="relative flex h-[33px] shrink-0 items-center bg-[#f3f3f3] pb-[2px] text-[#333]">
      <span className="pb-[2px] pl-[10px]">就绪</span>
      <button type="button" className="ml-[29px] flex items-center gap-[3px] pb-[2px]">
        <svg width="21" height="22" viewBox="0 0 21 22" fill="none" stroke="#444" strokeWidth="1.500">
          <path d="M8 1v8M5 6.500L8 9l3-2.500" /><path d="M5 2.500C-1 7-1 15 5 18.500c2 1 4 1 5 .8" strokeDasharray="6 2" /><path d="M12 10c0-4 7-4 7 0 0 3-3.500 3-3.500 6.500M15.500 19v2.500" strokeWidth="2.600" />
        </svg>
        辅助功能: 不可用
      </button>
      <div className="ml-auto flex items-center">
        <button type="button" aria-label="普通" className={view + " bg-[#c6c6c6]"}>
          <svg width="19" height="19" viewBox="0 0 19 19" fill="none" stroke="#666" strokeWidth="1.300"><path d="M.7.7h17.600v17.600H.7zM.7 6.500h17.600M.7 12.500h17.600M6.500.7v17.600M12.500.7v17.600" /></svg>
        </button>
        <button type="button" aria-label="页面布局" className={view}>
          <svg width="19" height="19" viewBox="0 0 19 19" fill="none" stroke="#666" strokeWidth="1.300"><path d="M.7.7h17.600v17.600H.7zM4.500 3.500h10v12h-10zM7 6.500h5M7 9.500h5M7 12.500h5" /></svg>
        </button>
        <button type="button" aria-label="分页预览" className={view}>
          <svg width="19" height="19" viewBox="0 0 19 19" fill="none" stroke="#666" strokeWidth="1.300"><path d="M.7.7h17.600v17.600H.7zM.7 11h11.500V.7M6.500.7V11" /></svg>
        </button>
        <button type="button" aria-label="缩小" className="ml-2 w-3"><svg width="12" height="12"><path d="M0 5h12v1.500H0z" fill="#333" /></svg></button>
        <input
          type="range" aria-label="显示比例" defaultValue="37"
          className="mx-2 h-5 w-[148px] appearance-none bg-transparent [&::-webkit-slider-runnable-track]:h-[2px] [&::-webkit-slider-runnable-track]:bg-[#222] [&::-webkit-slider-thumb]:-mt-2 [&::-webkit-slider-thumb]:h-[17px] [&::-webkit-slider-thumb]:w-2 [&::-webkit-slider-thumb]:appearance-none [&::-webkit-slider-thumb]:bg-[#666]"
        />
        <button type="button" aria-label="放大" className="w-3"><svg width="12" height="12"><path d="M0 5h12v1.500H0zM5.200 0h1.500v12H5.200z" fill="#333" /></svg></button>
        <button type="button" className="w-[67px] pr-[11px] text-right">75%</button>
      </div>
      <span className="absolute right-[14px] bottom-[6px] text-[19px] leading-6 whitespace-nowrap text-[#8c8c8c]/80">CSDN @工控老马</span>
    </footer>
  );
}

function LevelMeter() {
  return (
    <div className="absolute top-[811px] left-0 flex h-[89px] w-[17px] flex-col items-center gap-px rounded-r-md border border-l-0 border-[#6b6e7c] bg-[#4a4e60]/90 pt-2 pr-1">
      {Array.from({ length: 24 }, (_, i) => (
        <span key={i} className={"h-[2px] w-[7px] " + (i < 13 ? "bg-[#2e3140]" : i < 18 ? "bg-[#a3c46c]" : "bg-[#57c3a6]")} />
      ))}
    </div>
  );
}

export default function App() {
  return (
    <div className={"relative flex h-screen w-full flex-col overflow-hidden bg-[#e6e6e6] text-[18px] " + UI}>
      <TitleBar />
      <Ribbon />
      <QuickAccess />
      <FormulaBar />
      <main className="flex min-h-0 flex-1">
        <div className="min-w-0 flex-1 overflow-hidden border-r border-b border-[#9b9b9b]">
          <Sheet />
        </div>
        <div className="mt-[2px] mr-[3px] ml-[2px] flex w-[25px] flex-col bg-[#dadada]">
          <ScrollButton label="向上" d="M1 9h10L6 3z" className="" />
          <span className="flex-1 border border-[#777] bg-white" />
          <ScrollButton label="向下" d="M1 3h10L6 9z" className="mt-[50px]" />
        </div>
      </main>
      <SheetTabs />
      <StatusBar />
      <LevelMeter />
    </div>
  );
}
